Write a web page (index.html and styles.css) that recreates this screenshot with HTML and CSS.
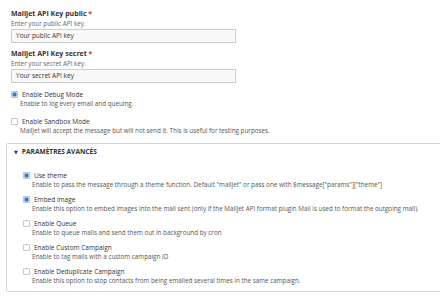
FILE: index.html
```html
<!DOCTYPE html>
<html>
<head>
<meta charset="utf-8">
<link rel="stylesheet" href="styles.css">
</head>
<body>
<div class="form">
  <div class="field">
    <div class="label">Mailjet API Key public <span class="req">*</span></div>
    <div class="desc">Enter your public API key.</div>
    <div class="input">Your public API key</div>
  </div>
  <div class="field">
    <div class="label">Mailjet API Key secret <span class="req">*</span></div>
    <div class="desc">Enter your secret API key.</div>
    <div class="input">Your secret API key</div>
  </div>
  <div class="check top">
    <div class="row"><span class="box on"></span><span class="clabel">Enable Debug Mode</span></div>
    <div class="cdesc">Enable to log every email and queuing.</div>
  </div>
  <div class="check top">
    <div class="row"><span class="box"></span><span class="clabel">Enable Sandbox Mode</span></div>
    <div class="cdesc">Mailjet will accept the message but will not send it. This is useful for testing purposes.</div>
  </div>
  <div class="fieldset">
    <div class="legend"><span class="tri">▼</span>PARAMÈTRES AVANCÉS</div>
    <div class="inner">
      <div class="check">
        <div class="row"><span class="box on"></span><span class="clabel">Use theme</span></div>
        <div class="cdesc">Enable to pass the message through a theme function. Default "mailjet" or pass one with $message["params"]["theme"]</div>
      </div>
      <div class="check">
        <div class="row"><span class="box on"></span><span class="clabel">Embed image</span></div>
        <div class="cdesc">Enable this option to embed images into the mail sent (only if the Mailjet API format plugin Mail is used to format the outgoing mail).</div>
      </div>
      <div class="check">
        <div class="row"><span class="box"></span><span class="clabel">Enable Queue</span></div>
        <div class="cdesc">Enable to queue mails and send them out in background by cron</div>
      </div>
      <div class="check">
        <div class="row"><span class="box"></span><span class="clabel">Enable Custom Campaign</span></div>
        <div class="cdesc">Enable to tag mails with a custom campaign ID</div>
      </div>
      <div class="check">
        <div class="row"><span class="box"></span><span class="clabel">Enable Deduplicate Campaign</span></div>
        <div class="cdesc">Enable this option to stop contacts from being emailed several times in the same campaign.</div>
      </div>
    </div>
  </div>
</div>
</body>
</html>
```

FILE: styles.css
```css
html, body { margin: 0; padding: 0; background: #fff; }
body { font-family: "Open Sans", "DejaVu Sans", sans-serif; color: #333; overflow: hidden; }
.form { padding: 9px 0 0 11px; width: 440px; box-sizing: border-box; }
.field { margin-bottom: 6px; }
.label { font-size: 7px; font-weight: bold; line-height: 10px; color: #333; }
.req { color: #e0301e; }
.desc { font-size: 6.3px; line-height: 10px; color: #666; }
.input { width: 225px; height: 14px; box-sizing: border-box; border: 1px solid #ccc; background: #f9f9f8; font-size: 6.5px; line-height: 12px; padding-left: 4px; color: #333; }
.field + .field + .check { margin-top: 1px; }
.check { margin-bottom: 5px; }
.check.top { margin-bottom: 7px; }
.row { display: flex; align-items: center; height: 10px; }
.box { width: 7px; height: 7px; box-sizing: border-box; border: 1px solid #c8c8c8; background: #fff; border-radius: 1px; margin-right: 4px; display: inline-block; }
.box.on { border-color: #bcc8da; background: #3474d0; box-shadow: inset 0 0 0 0.5px #fff; }
.clabel { font-size: 6.5px; color: #333; }
.cdesc { font-size: 6.3px; line-height: 9px; color: #555; padding-left: 9px; }
.check.top .cdesc { line-height: 10px; }
.fieldset { margin: 4px 0 0 -5px; border: 1px solid #d4d4d4; border-radius: 2px; height: 149px; box-sizing: border-box; width: 440px; }
.legend { font-size: 6.6px; font-weight: bold; color: #333; padding: 4px 0 0 7px; line-height: 8px; }
.tri { font-size: 5px; margin-right: 4px; }
.inner { padding: 14px 0 0 16px; }
```
